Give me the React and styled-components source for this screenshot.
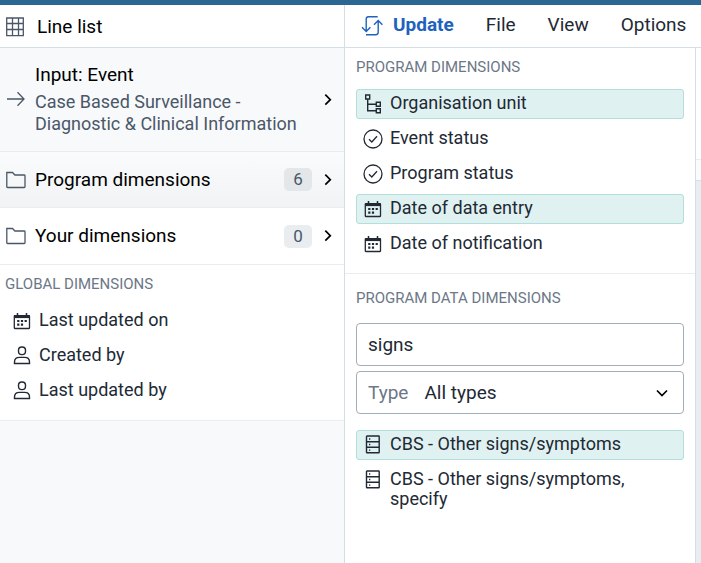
import React from "react";
import styled, { createGlobalStyle, css } from "styled-components";

const GlobalStyle = createGlobalStyle`
  *, *::before, *::after { box-sizing: border-box; }
  body {
    margin: 0;
    background: #fff;
    color: #212934;
    font-family: Roboto, "Liberation Sans", sans-serif;
    font-size: 18px;
    line-height: 20px;
  }
  button, input, select { font: inherit; color: inherit; }
  button { cursor: pointer; }
  h2, ul, p { margin: 0; padding: 0; }
`;

const Page = styled.div`
  display: flex;
  flex-direction: column;
  min-height: 100vh;
  overflow-x: hidden;
`;

const Brand = styled.div`
  flex: none;
  height: 5px;
  background: #2c6693;
`;

const Toolbar = styled.header`
  display: flex;
  flex: none;
  height: 43px;
  border-bottom: 1px solid #d5dde5;
`;

const columnWidth = css`
  flex: 0 0 345px;
  border-right: 1px solid #d5dde5;
`;

const VisType = styled.button`
  ${columnWidth}
  display: flex;
  align-items: center;
  gap: 13px;
  padding: 1px 6px 0;
  border-width: 0 1px 0 0;
  background: #fff;
  color: #000;
  font-size: 19px;
  line-height: 22px;
`;

const Menu = styled.nav`
  display: flex;
  align-items: center;
  padding: 0 0 2px 16px;
  gap: 32px;
`;

const MenuButton = styled.button`
  display: flex;
  align-items: center;
  gap: 10px;
  padding: 0;
  border: 0;
  background: none;
  font-size: 19px;
  line-height: 22px;
  font-weight: ${(p) => (p.$primary ? 700 : 400)};
  color: ${(p) => (p.$primary ? "#1e62bd" : "#212934")};

  svg { margin-top: 2px; }
`;

const Body = styled.div`
  display: flex;
  flex: 1;
`;

const Sidebar = styled.aside`
  ${columnWidth}
  background: #f8f9fb;
`;

const SourceButton = styled.button`
  display: flex;
  align-items: center;
  width: 100%;
  min-height: ${(p) => (p.$tall ? "104px" : p.$open ? "56px" : "57px")};
  padding: 0 12px 0 6px;
  border: 0;
  border-bottom: 1px solid #e8edf2;
  background: ${(p) =>
    p.$open ? "linear-gradient(#fafbfc, #f1f3f5)" : p.$tall ? "#f8f9fb" : "#fff"};
  color: #000;
  font-size: 19px;
  line-height: 22px;
  text-align: left;
`;

const SourceText = styled.span`
  flex: 1;
  padding-left: 9px;
`;

const SourceDetail = styled.span`
  display: block;
  margin-top: 5px;
  color: #4a5768;
  font-size: 18px;
`;

const Count = styled.span`
  width: 28px;
  margin-right: 12px;
  padding-bottom: 1px;
  border-radius: 5px;
  background: ${(p) => (p.$open ? "#e3e7ea" : "#e9edf0")};
  color: #4a5768;
  font-size: 17px;
  line-height: 22px;
  text-align: center;
`;

const GlobalSection = styled.section`
  padding: 9px 0 14px;
  border-bottom: 1px solid #e8edf2;
  background: #fff;
`;

const SectionTitle = styled.h2`
  padding-left: ${(p) => (p.$inset ? "0" : "5px")};
  color: #6c7787;
  font-size: 15px;
  font-weight: 400;
  line-height: 20px;
`;

const DimensionList = styled.ul`
  display: flex;
  flex-direction: column;
  gap: 5px;
  margin-top: ${(p) => p.$top};
  padding: ${(p) => (p.$inset ? "0" : "0 5px")};
  list-style: none;
`;

const DimensionButton = styled.button`
  display: flex;
  align-items: flex-start;
  gap: 7px;
  width: 100%;
  padding: 3px 6px 4px;
  border: 1px solid ${(p) => (p.$selected ? "#b2dfdb" : "transparent")};
  border-radius: 3px;
  background: ${(p) => (p.$selected ? "#e0f1f1" : "transparent")};
  text-align: left;

  svg { margin-top: 1px; }
`;

const Panel = styled.main`
  flex: 0 0 351px;
  border-right: 1px solid #d5dde5;
`;

const PanelSection = styled.section`
  padding: ${(p) => (p.$first ? "9px 11px 14px" : "14px 11px")};
  border-bottom: ${(p) => (p.$first ? "1px solid #e8edf2" : "0")};
`;

const fieldBox = css`
  width: 100%;
  height: 43px;
  border: 1px solid #a0adba;
  border-radius: 4px;
  background: #fff;
  font-size: 19px;
`;

const SearchInput = styled.input`
  ${fieldBox}
  display: block;
  margin-top: 15px;
  padding: 0 11px;
`;

const TypeField = styled.label`
  ${fieldBox}
  display: flex;
  align-items: center;
  margin-top: 5px;
  padding: 0 13px 0 11px;
  color: #6c7787;
`;

const TypeSelect = styled.select`
  flex: 1;
  height: 100%;
  margin-left: 16px;
  padding: 0;
  border: 0;
  outline: 0;
  appearance: none;
  background: transparent;
  color: #212934;
`;

const Canvas = styled.div`
  display: flex;
  flex: 1;
  flex-direction: column;
  background: #e8edf2;
`;

const AxisRow = styled.div`
  height: ${(p) => (p.$filters ? "21px" : "112px")};
  border-bottom: 1px solid ${(p) => (p.$filters ? "#d5dde5" : "#e8edf2")};
  background: ${(p) => (p.$filters ? "#fafbfd" : "#fff")};
`;

const Svg = styled.svg`
  flex: none;
  display: block;
  fill: none;
  stroke: ${(p) => p.$color || "#212934"};
  stroke-width: ${(p) => p.$weight || 1};
`;

const Icon = ({ w = 20, h = 20, color, weight, children }) => (
  <Svg width={w} height={h} viewBox={`0 0 ${w} ${h}`} $color={color} $weight={weight} aria-hidden="true">
    {children}
  </Svg>
);

const GridIcon = () => (
  <Icon w={18} color="#4a5768" weight="1.3">
    <path d="M.7 1h16.600v17.700H.7zM.7 6.500h16.600M.7 12.500h16.600M6.500 1v17.700M12.500 1v17.700" />
  </Icon>
);

const UpdateIcon = () => (
  <Icon w={22} color="#1e62bd" weight="1.4">
    <path d="M16.700 .8H7.500Q5.200 .8 5.200 3.100V15.300M1 11.300l4.200 4.200 4.200-4.200M5 18.700h9.800q2.400 0 2.400-2.400V4.700M13 8.700l4.200-4.200 4.200 4.200" />
  </Icon>
);

const ArrowIcon = () => (
  <Icon color="#4a5768" weight="1.3">
    <path d="M1 9h17M11.500 2.300L18 9l-6.500 6.700" />
  </Icon>
);

const FolderIcon = () => (
  <Icon color="#4a5768" weight="1.3">
    <path d="M.8 2.500h5.700l2.400 2.500h9.300q.8 0 .8.800v10.900q0 .8-.8.800H1.600q-.8 0-.8-.8z" />
  </Icon>
);

const ChevronRight = () => (
  <Icon w={8} h={14} color="#000" weight="1.7">
    <path d="M1.300 1.700l5 5-5 5" />
  </Icon>
);

const ChevronDown = () => (
  <Icon w={16} h={16} color="#000" weight="1.7">
    <path d="M3 5.500l5 5 5-5" />
  </Icon>
);

const CalendarIcon = () => (
  <Icon weight="1.3">
    <rect x="2.300" y="4.700" width="15.200" height="12.800" rx=".5" />
    <path d="M2 5.800h15.800" strokeWidth="2.600" />
    <path d="M5.500 2v3M14.500 2v3" strokeWidth="1.5" />
    <path
      d="M5.200 10h2.200M8.900 10h2.200M12.600 10h2.200M5.200 13.700h2.200M8.900 13.700h2.200"
      strokeWidth="2.200"
    />
  </Icon>
);

const UserIcon = () => (
  <Icon weight="1.4">
    <rect x="6.500" y="1" width="7" height="7.600" rx="3.300" />
    <path d="M2.500 17.500v-1.600q0-4.500 4.900-4.500h5.200q4.900 0 4.900 4.500v1.600z" />
  </Icon>
);

const CheckIcon = () => (
  <Icon weight="1.3">
    <circle cx="10" cy="10" r="9" />
    <path d="M6 10.300l2.800 2.700L14 7.200" />
  </Icon>
);

const OrgUnitIcon = () => (
  <Icon weight="1.4">
    <path d="M2.700 1h4v4h-4zM13.300 8.300h4v4h-4zM13.300 14.700h4v4h-4zM4.700 5v11.700h8.600M4.700 10.300h8.600" />
  </Icon>
);

const DataIcon = () => (
  <Icon weight="1.4">
    <rect x="3.500" y="1" width="12.700" height="16.800" rx=".5" />
    <path d="M3.500 6.700h12.700M3.500 12.300h12.700" />
    <path d="M6 4h1.300M6 9.500h1.300M6 15.200h1.300" strokeWidth="1.3" />
  </Icon>
);

const icons = {
  calendar: CalendarIcon,
  user: UserIcon,
  check: CheckIcon,
  org: OrgUnitIcon,
  data: DataIcon,
};

const globalDimensions = [
  { label: "Last updated on", icon: "calendar" },
  { label: "Created by", icon: "user" },
  { label: "Last updated by", icon: "user" },
];

const programDimensions = [
  { label: "Organisation unit", icon: "org", selected: true },
  { label: "Event status", icon: "check" },
  { label: "Program status", icon: "check" },
  { label: "Date of data entry", icon: "calendar", selected: true },
  { label: "Date of notification", icon: "calendar" },
];

const dataDimensions = [
  { label: "CBS - Other signs/symptoms", icon: "data", selected: true },
  { label: "CBS - Other signs/symptoms, specify", icon: "data" },
];

const Dimensions = ({ items, top, inset }) => (
  <DimensionList $top={top} $inset={inset}>
    {items.map(({ label, icon, selected }) => {
      const Glyph = icons[icon];
      return (
        <li key={label}>
          <DimensionButton type="button" $selected={selected}>
            <Glyph />
            <span>{label}</span>
          </DimensionButton>
        </li>
      );
    })}
  </DimensionList>
);

const Folder = ({ label, count, open }) => (
  <SourceButton type="button" $open={open}>
    <FolderIcon />
    <SourceText>{label}</SourceText>
    <Count $open={open}>{count}</Count>
    <ChevronRight />
  </SourceButton>
);

export default function App() {
  return (
    <Page>
      <GlobalStyle />
      <Brand />
      <Toolbar>
        <VisType type="button">
          <GridIcon />
          Line list
        </VisType>
        <Menu>
          <MenuButton type="button" $primary>
            <UpdateIcon />
            Update
          </MenuButton>
          <MenuButton type="button">File</MenuButton>
          <MenuButton type="button">View</MenuButton>
          <MenuButton type="button">Options</MenuButton>
        </Menu>
      </Toolbar>
      <Body>
        <Sidebar>
          <SourceButton type="button" $tall>
            <ArrowIcon />
            <SourceText>
              Input: Event
              <SourceDetail>Case Based Surveillance - Diagnostic &amp; Clinical Information</SourceDetail>
            </SourceText>
            <ChevronRight />
          </SourceButton>
          <Folder label="Program dimensions" count={6} open />
          <Folder label="Your dimensions" count={0} />
          <GlobalSection>
            <SectionTitle>GLOBAL DIMENSIONS</SectionTitle>
            <Dimensions items={globalDimensions} top="12px" />
          </GlobalSection>
        </Sidebar>
        <Panel>
          <PanelSection $first>
            <SectionTitle $inset>PROGRAM DIMENSIONS</SectionTitle>
            <Dimensions items={programDimensions} top="12px" inset />
          </PanelSection>
          <PanelSection>
            <SectionTitle $inset>PROGRAM DATA DIMENSIONS</SectionTitle>
            <SearchInput aria-label="Search data dimensions" defaultValue="signs" />
            <TypeField>
              Type
              <TypeSelect defaultValue="all">
                <option value="all">All types</option>
              </TypeSelect>
              <ChevronDown />
            </TypeField>
            <Dimensions items={dataDimensions} top="16px" inset />
          </PanelSection>
        </Panel>
        <Canvas>
          <AxisRow />
          <AxisRow $filters />
        </Canvas>
      </Body>
    </Page>
  );
}
